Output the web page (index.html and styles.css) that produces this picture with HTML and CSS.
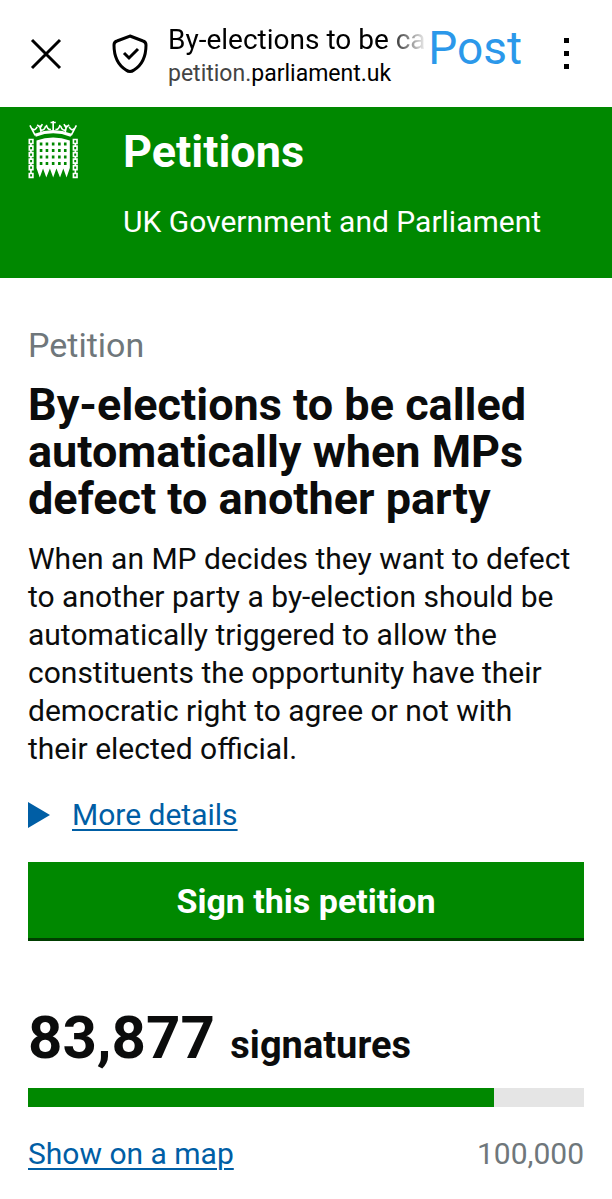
FILE: index.html
```html
<!DOCTYPE html>
<html lang="en">
<head>
    <meta charset="utf-8">
    <meta name="viewport" content="width=device-width, initial-scale=1">
    <title>By-elections to be called automatically - Petitions</title>
    <link rel="stylesheet" href="styles.css">
</head>
<body>
    <div class="toolbar">
        <button type="button" class="icon-button close" aria-label="Close">
            <svg width="32" height="32" viewBox="0 0 32 32"><path d="M2 2L30 30M30 2L2 30"/></svg>
        </button>
        <svg class="shield" width="36" height="40" viewBox="0 0 36 40">
            <path d="M18 2L31 7Q34 8 34 11C34 24 30 31 22 36Q18 39 14 36C6 31 2 24 2 11Q2 8 5 7Z"/>
            <path d="M12 19L17 24L26 15"/>
        </svg>
        <div class="page-info">
            <div class="page-title">By-elections to be ca</div>
            <div class="page-url">petition.<span>parliament.uk</span></div>
        </div>
        <button type="button" class="post">Post</button>
        <button type="button" class="icon-button menu" aria-label="Menu">
            <svg width="6" height="32" viewBox="0 0 6 32"><path d="M0 0H5V5H0ZM0 13H5V18H0ZM0 26H5V31H0Z"/></svg>
        </button>
    </div>

    <header class="banner">
        <svg class="crest" width="50" height="61" viewBox="54 42 153 183">
            <!-- crown -->
            <path class="band" d="M76 90Q131 68 186 90"/>
            <path class="points" d="M76 90L60 60M186 90L202 60M131 80V46M123 51H139M94 80L90 60M168 80L172 60M66 70Q76 78 82 64M196 70Q186 78 180 64M94 74Q104 76 108 62M168 74Q158 76 154 62M124 72Q114 74 110 58M138 72Q148 74 152 58M82 58L92 66L98 56M180 58L170 66L164 56"/>
            <!-- portcullis -->
            <path fill-rule="evenodd" d="M80 106Q131 88 182 106V190L172 219L162 192L152 219L141 192L131 219L121 192L110 219L100 192L90 219L80 190Z
                M90 112H98V121H90ZM108 112H116V121H108ZM127 112H135V121H127ZM146 112H154V121H146ZM164 112H172V121H164Z
                M90 132H98V141H90ZM108 132H116V141H108ZM127 132H135V141H127ZM146 132H154V141H146ZM164 132H172V141H164Z
                M90 152H98V161H90ZM108 152H116V161H108ZM127 152H135V161H127ZM146 152H154V161H146ZM164 152H172V161H164Z
                M90 172H98V181H90ZM108 172H116V181H108ZM127 172H135V181H127ZM146 172H154V181H146ZM164 172H172V181H164Z"/>
            <!-- chains -->
            <path class="chain" d="M58 103H69V115H58ZM58 123H69V135H58ZM58 143H69V155H58ZM58 163H69V175H58ZM58 183H69V195H58ZM58 207H69V219H58ZM63 115V123M63 135V143M63 155V163M63 175V183M63 195V207
                M193 103H204V115H193ZM193 123H204V135H193ZM193 143H204V155H193ZM193 163H204V175H193ZM193 183H204V195H193ZM193 207H204V219H193ZM199 115V123M199 135V143M199 155V163M199 175V183M199 195V207"/>
        </svg>
        <div>
            <a href="#" class="site-name">Petitions</a>
            <p class="tagline">UK Government and Parliament</p>
        </div>
    </header>

    <main>
        <h1><span class="context">Petition</span> By-elections to be called automatically when MPs defect to another party</h1>
        <p class="action">When an MP decides they want to defect to another party a by-election should be automatically triggered to allow the constituents the opportunity have their democratic right to agree or not with their elected official.</p>

        <details>
            <summary><svg width="22" height="26" viewBox="0 0 22 26"><path d="M0 0L22 13L0 26Z"/></svg><span>More details</span></summary>
        </details>

        <button type="button" class="sign">Sign this petition</button>

        <p class="count"><span>83,877</span> signatures</p>
        <div class="graph"><div class="progress" style="width: 83.877%"></div></div>
        <div class="graph-labels">
            <a href="#">Show on a map</a>
            <span>100,000</span>
        </div>
    </main>
</body>
</html>
```

FILE: styles.css
```css
body {
    margin: 0;
    font-family: Roboto, "Liberation Sans", sans-serif;
    font-size: 30px;
    line-height: 38px;
    color: #0b0c0c;
    background: #fff;
}

p {
    margin: 0;
}

button {
    padding: 0;
    border: 0;
    background: none;
    font-family: inherit;
    cursor: pointer;
}

a {
    color: #005ea5;
    text-underline-offset: 4px;
    text-decoration-thickness: 2px;
}

/* browser bar */
.toolbar {
    display: flex;
    align-items: center;
    height: 107px;
    padding: 0 42px 0 30px;
    box-sizing: border-box;
    color: #000;
}

.icon-button svg {
    display: block;
}

.close path,
.shield path {
    fill: none;
    stroke: #000;
    stroke-width: 3;
}

.shield {
    flex: none;
    margin: 0 20px 0 50px;
}

.page-info {
    flex: 1;
    min-width: 0;
    padding-top: 4px;
}

.page-title {
    white-space: nowrap;
    font-size: 28px;
    line-height: 36px;
    mask-image: linear-gradient(to right, #000 84%, transparent);
}

.page-url {
    font-size: 23px;
    line-height: 32px;
    color: #444;
}

.page-url span {
    color: #000;
}

.post {
    font-size: 46px;
    line-height: 60px;
    color: #2b98ea;
    margin-bottom: 12px;
}

.menu {
    margin-left: 42px;
}

/* green header */
.banner {
    display: flex;
    gap: 45px;
    padding: 12px 28px 37px;
    color: #fff;
    background: #008800;
}

.crest {
    flex: none;
    fill: #fff;
}

.band,
.points,
.chain {
    fill: none;
    stroke: #fff;
    stroke-width: 5;
}

.band {
    stroke-width: 10;
}

.site-name {
    display: block;
    margin-bottom: 18px;
    font-size: 45px;
    font-weight: bold;
    line-height: 66px;
    color: #fff;
    text-decoration: none;
}

/* petition */
main {
    padding: 44px 28px 26px;
}

h1 {
    margin: 0 0 18px;
    font-size: 45px;
    line-height: 47px;
}

.context {
    display: block;
    margin-bottom: 12px;
    font-size: 34px;
    font-weight: normal;
    color: #6f777b;
}

.action {
    padding-right: 8px;
}

summary {
    display: flex;
    align-items: center;
    gap: 22px;
    margin: 28px 0;
    color: #005ea5;
    text-decoration: underline 2px;
    text-underline-offset: 4px;
    cursor: pointer;
}

summary svg {
    fill: #005ea5;
}

.sign {
    display: block;
    width: 100%;
    padding: 20px 0 18px;
    border-bottom: 3px solid #003e00;
    font-size: 34px;
    font-weight: bold;
    line-height: 38px;
    color: #fff;
    background: #008800;
}

.count {
    margin: 62px 0 8px;
    font-size: 38px;
    font-weight: bold;
    line-height: 70px;
}

.count span {
    margin-right: 6px;
    font-size: 60px;
}

.graph {
    height: 19px;
    background: #e5e5e5;
}

.progress {
    height: 100%;
    background: #008800;
}

.graph-labels {
    display: flex;
    justify-content: space-between;
    margin-top: 28px;
    color: #6f777b;
}
```
